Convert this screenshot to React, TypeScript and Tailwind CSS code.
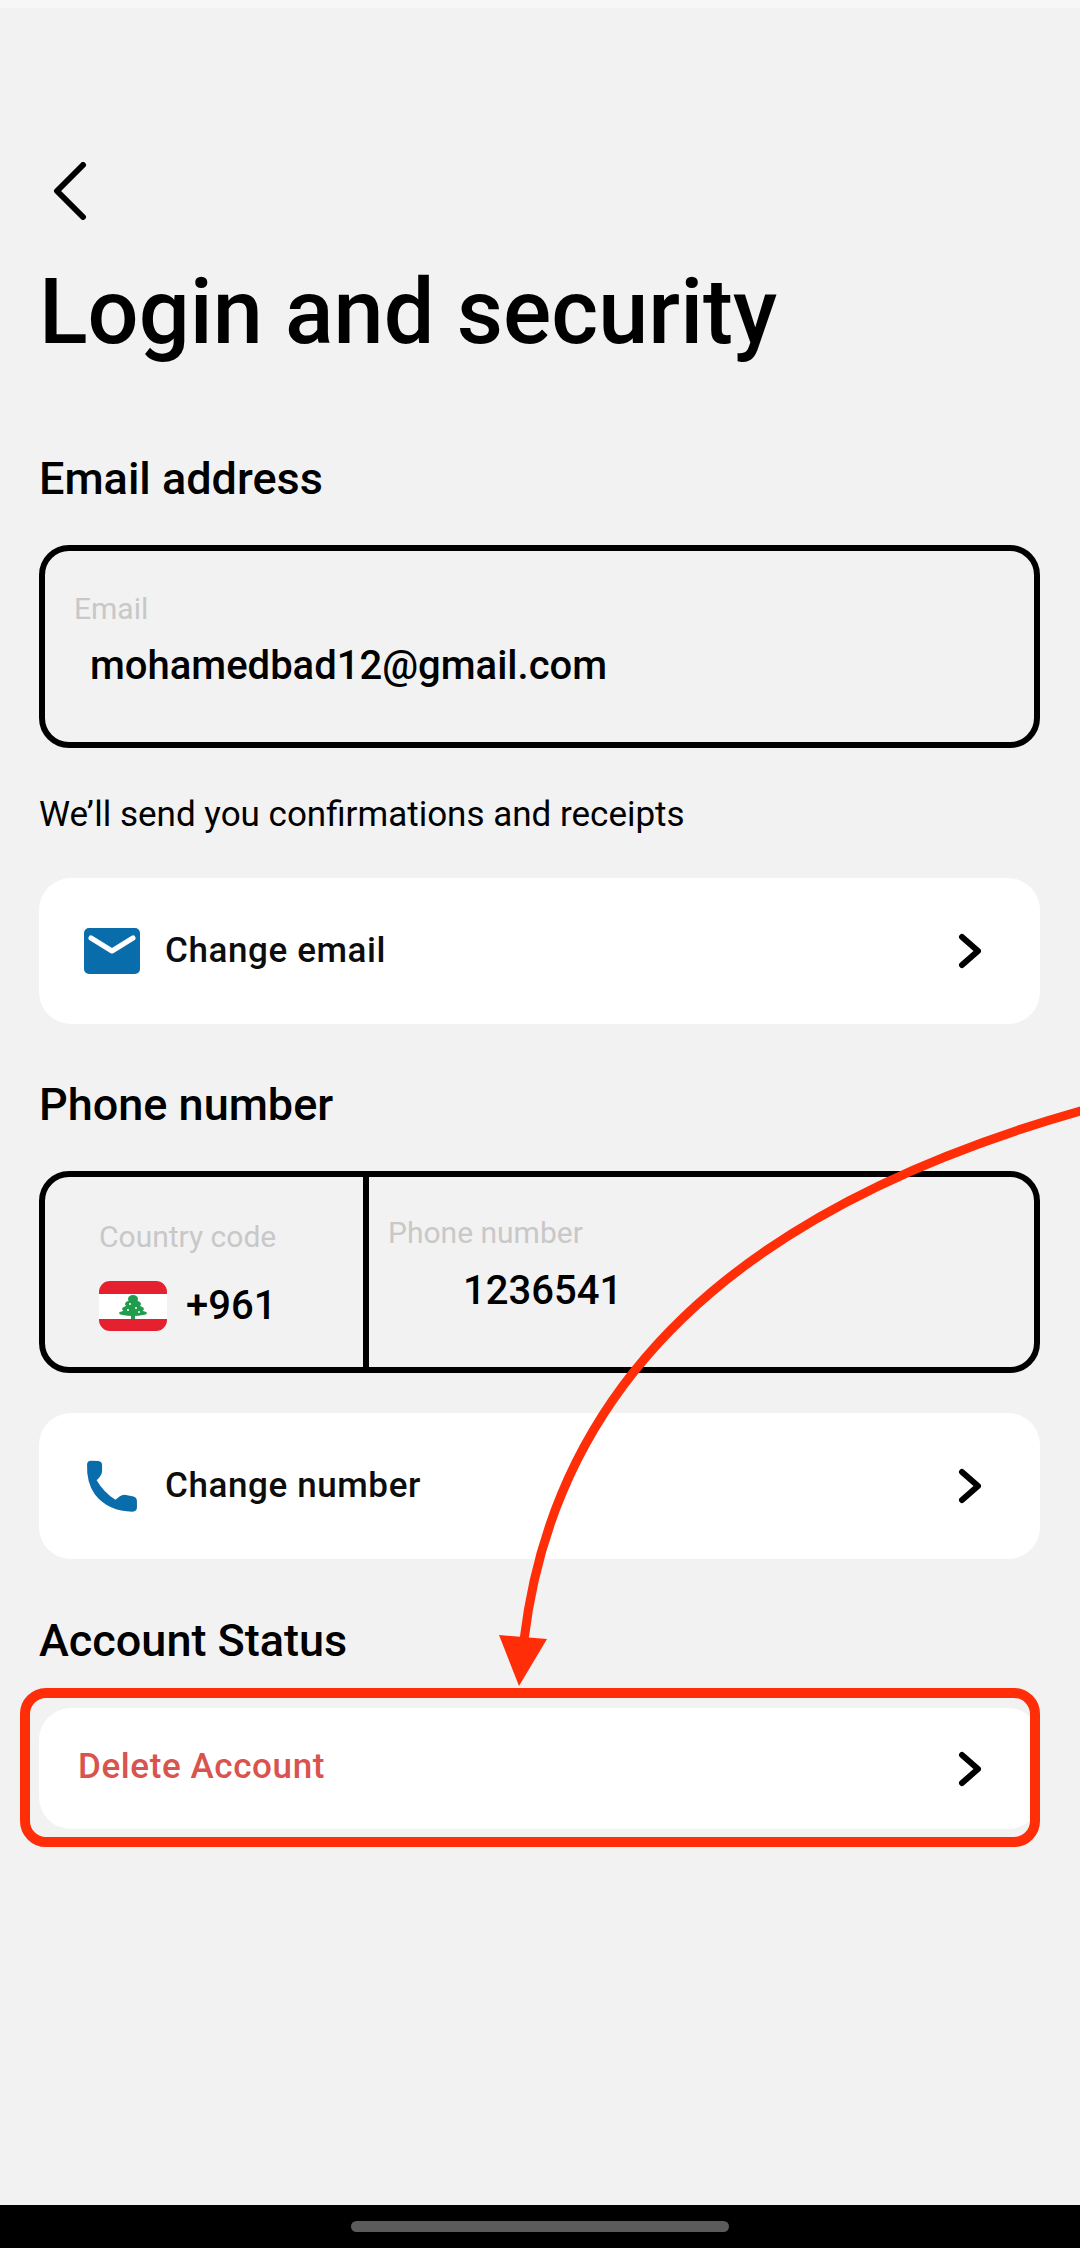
function Chevron() {
  return (
    <svg width="24" height="36" viewBox="0 0 24 36" fill="none" className="shrink-0">
      <path d="M4 4 L20 18 L4 32" stroke="#000" strokeWidth="6" strokeLinecap="round" strokeLinejoin="round" />
    </svg>
  )
}

function MailIcon() {
  return (
    <svg width="56" height="46" viewBox="0 0 56 46" className="shrink-0">
      <rect width="56" height="46" rx="5" fill="#0a6dab" />
      <path d="M7 10 L28 23 L49 10" fill="none" stroke="#fff" strokeWidth="5" strokeLinecap="round" strokeLinejoin="round" />
    </svg>
  )
}

function PhoneIcon() {
  return (
    <svg width="56" height="54" viewBox="18 26 154 158" className="shrink-0">
      <path
        fill="#0a6dab"
        d="M22 42 Q22 32 34 31 L55 32 Q66 33 66 44 L66 62 Q66 72 58 80 L50 88 Q72 125 105 145 L118 135 Q126 129 136 131 L158 136 Q168 139 168 150 L168 168 Q168 180 155 180 Q85 180 45 130 Q20 95 22 42 Z"
      />
    </svg>
  )
}

function LebanonFlag() {
  return (
    <svg width="68" height="50" viewBox="0 0 68 50" className="shrink-0">
      <rect width="68" height="50" rx="11" fill="#e5212f" />
      <rect y="13" width="68" height="25" fill="#fff" />
      <g fill="#1f9d4d">
        <ellipse cx="34" cy="18" rx="5" ry="4" />
        <ellipse cx="34" cy="23" rx="8" ry="4" />
        <ellipse cx="34" cy="28" rx="11" ry="4" />
        <ellipse cx="34" cy="32" rx="14" ry="3" />
        <rect x="32" y="33" width="4" height="5" />
      </g>
      <g fill="#fff">
        <circle cx="31" cy="23" r="1" />
        <circle cx="37" cy="27" r="1" />
        <circle cx="29" cy="29" r="1" />
        <circle cx="40" cy="31" r="1" />
      </g>
    </svg>
  )
}

function ActionCard({ icon, label }: { icon: React.ReactNode; label: string }) {
  return (
    <div className="flex h-[146px] items-center rounded-[32px] bg-white pr-[58px] pl-[45px]">
      {icon}
      <span className="ml-[25px] flex-1 text-[35px] leading-[44px] font-medium tracking-[0.6px] text-[#0d0d0d]">{label}</span>
      <Chevron />
    </div>
  )
}

export default function App() {
  return (
    <div className="relative flex h-[2248px] w-[1080px] flex-col overflow-hidden bg-[#f2f2f2] font-['Roboto',sans-serif] text-black">
      <div className="h-2 bg-[#f7f7f7]" />

      <main className="flex-1 pr-[40px] pl-[39px]">
        <button className="mt-[154px] ml-[13px] block">
          <svg width="36" height="58" viewBox="0 0 36 58" fill="none">
            <path d="M31 3 L5 29 L31 55" stroke="#000" strokeWidth="6" strokeLinecap="round" strokeLinejoin="round" />
          </svg>
        </button>
        <h1 className="mt-[41px] text-[90px] leading-[104px] font-medium">Login and security</h1>

        <h2 className="mt-[89px] text-[45px] leading-[50px] font-medium">Email address</h2>
        <div className="mt-[41px] h-[203px] rounded-[30px] border-[6px] border-black pt-[41px] pl-[29px]">
          <p className="text-[30px] leading-[34px] text-[#c8c8c8]">Email</p>
          <p className="mt-[16px] ml-[16px] text-[40px] leading-[48px] font-medium">mohamedbad12@gmail.com</p>
        </div>

        <p className="mt-[46px] text-[35px] leading-[42px]">We’ll send you confirmations and receipts</p>

        <div className="mt-[42px]">
          <ActionCard icon={<MailIcon />} label="Change email" />
        </div>

        <h2 className="mt-[56px] text-[45px] leading-[50px] font-medium">Phone number</h2>
        <div className="mt-[41px] flex h-[202px] rounded-[30px] border-[6px] border-black">
          <div className="w-[324px] shrink-0 border-r-[6px] border-black pt-[42px] pl-[54px]">
            <p className="text-[30px] leading-[36px] text-[#c8c8c8]">Country code</p>
            <div className="mt-[26px] flex items-center gap-[19px]">
              <LebanonFlag />
              <span className="text-[40px] leading-[48px] font-medium">+961</span>
            </div>
          </div>
          <div className="flex-1 pt-[38px] pl-[19px]">
            <p className="text-[30px] leading-[36px] text-[#c8c8c8]">Phone number</p>
            <p className="mt-[16px] ml-[75px] text-[40px] leading-[48px] font-medium">1236541</p>
          </div>
        </div>

        <div className="mt-[40px]">
          <ActionCard icon={<PhoneIcon />} label="Change number" />
        </div>

        <h2 className="mt-[57px] text-[45px] leading-[50px] font-medium">Account Status</h2>
        <div className="mt-[42px] flex h-[121px] items-center rounded-[32px] bg-white pr-[58px] pl-[39px]">
          <span className="mb-[3px] flex-1 text-[35px] leading-[44px] font-medium tracking-[0.6px] text-[#d9534f]">Delete Account</span>
          <Chevron />
        </div>
      </main>

      <div className="flex h-[43px] items-center justify-center bg-black">
        <div className="h-[11px] w-[378px] rounded-full bg-[#5b5b5b]" />
      </div>

      {/* red annotation drawn on top of the screenshot */}
      <div className="absolute top-[1688px] left-[20px] h-[159px] w-[1020px] rounded-[26px] border-[10px] border-[#ff2d08]" />
      <svg className="pointer-events-none absolute inset-0" width="1080" height="2248" viewBox="0 0 1080 2248" fill="none">
        <path d="M1084 1110 C800 1190 560 1340 524 1640" stroke="#ff2d08" strokeWidth="9" />
        <path d="M499 1635 L547 1639 L519 1686 Z" fill="#ff2d08" />
      </svg>
    </div>
  )
}
